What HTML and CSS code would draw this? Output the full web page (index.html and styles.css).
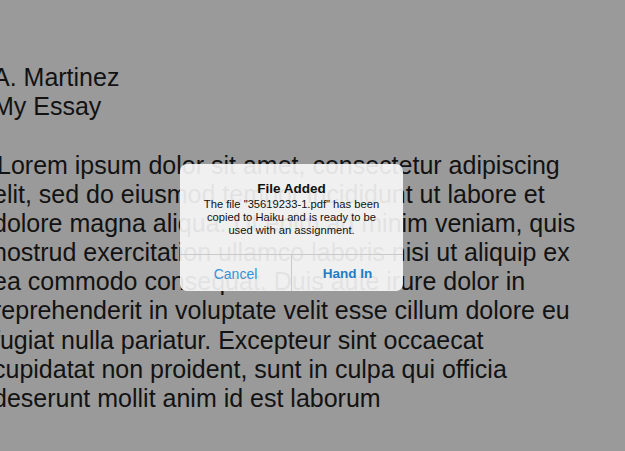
FILE: index.html
```html
<!DOCTYPE html>
<html>
<head>
<meta charset="utf-8">
<link rel="stylesheet" href="styles.css">
</head>
<body>
<main class="doc">
  <header class="doc-head">
    <div class="line">A. Martinez</div>
    <div class="line">My Essay</div>
  </header>
  <p class="doc-body">Lorem ipsum dolor sit amet, consectetur adipiscing<br>elit, sed do eiusmod tempor incididunt ut labore et<br>dolore magna aliqua. Ut enim ad minim veniam, quis<br>nostrud exercitation ullamco laboris nisi ut aliquip ex<br>ea commodo consequat. Duis aute irure dolor in<br>reprehenderit in voluptate velit esse cillum dolore eu<br>fugiat nulla pariatur. Excepteur sint occaecat<br>cupidatat non proident, sunt in culpa qui officia<br>deserunt mollit anim id est laborum</p>
</main>
<div class="alert">
  <div class="alert-content">
    <div class="alert-title">File Added</div>
    <div class="alert-msg">The file "35619233-1.pdf" has been<br>copied to Haiku and is ready to be<br>used with an assignment.</div>
  </div>
  <div class="alert-actions">
    <div class="btn btn-cancel">Cancel</div>
    <div class="btn btn-primary">Hand In</div>
  </div>
</div>
</body>
</html>
```
FILE: styles.css
```css
html, body {
  margin: 0;
  padding: 0;
  height: 100%;
  overflow: hidden;
}
body {
  background: #9a9a9a;
  font-family: "Liberation Sans", Arial, Helvetica, sans-serif;
  color: #121212;
}
.doc {
  padding-top: 63px;
  margin-left: -7px;
  font-size: 25px;
  line-height: 28.5px;
}
.doc-head .line {
  white-space: nowrap;
}
.doc-body {
  margin: 31px 0 0 0;
  line-height: 29.1px;
  text-indent: 4px;
  white-space: nowrap;
}
.alert {
  position: absolute;
  left: 180px;
  top: 164px;
  width: 223px;
  height: 127px;
  border-radius: 7px;
  background: rgba(250, 250, 250, 0.9);
  display: flex;
  flex-direction: column;
  overflow: hidden;
}
.alert-content {
  flex: 1;
  padding-top: 17px;
  text-align: center;
  color: #111;
}
.alert-title {
  font-weight: bold;
  font-size: 13.5px;
  line-height: 16px;
}
.alert-msg {
  margin-top: 1px;
  font-size: 11.2px;
  line-height: 13px;
}
.alert-actions {
  height: 36px;
  display: flex;
  border-top: 1px solid #c9c9c9;
}
.btn {
  flex: 1;
  display: flex;
  align-items: center;
  justify-content: center;
  padding-top: 1px;
  font-size: 14px;
}
.btn-cancel {
  color: #3592d6;
  border-right: 1px solid #c9c9c9;
}
.btn-primary {
  color: #1f7cc3;
  font-weight: bold;
  font-size: 13.5px;
}
```
